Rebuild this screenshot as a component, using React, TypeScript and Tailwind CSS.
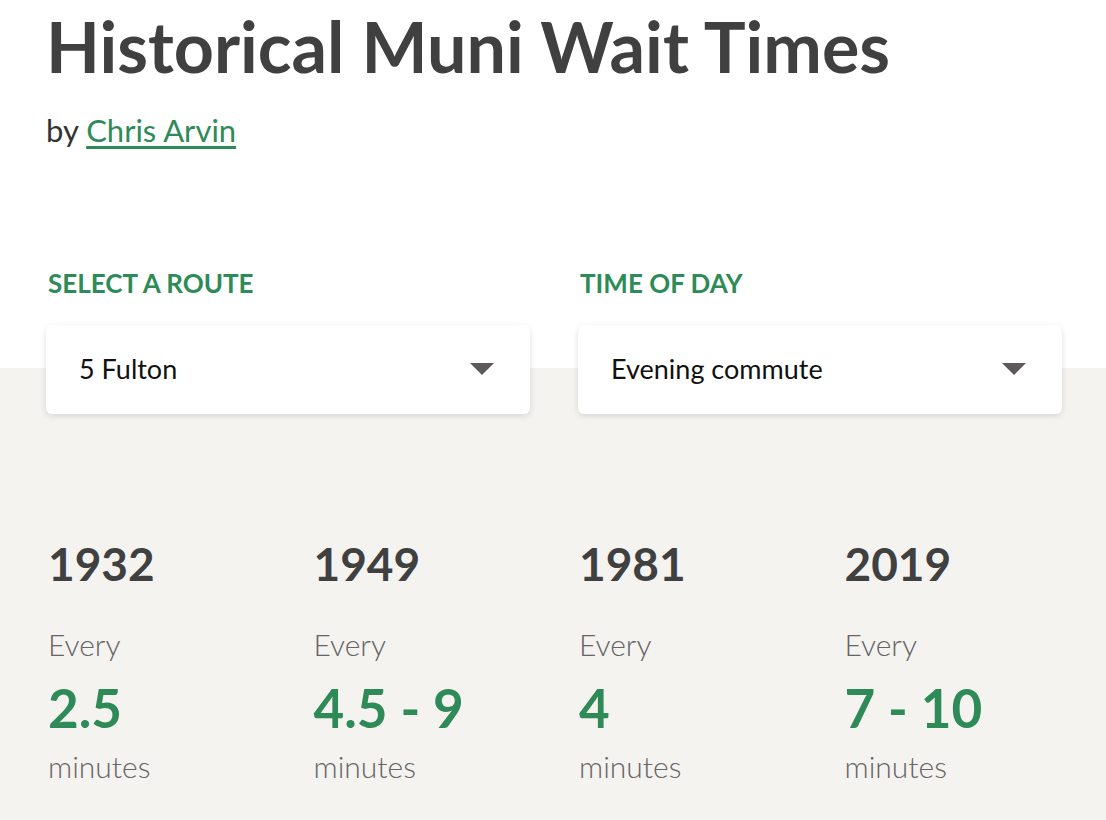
import React from 'react';

const stats = [
  { year: '1932', value: '2.5' },
  { year: '1949', value: '4.5 - 9' },
  { year: '1981', value: '4' },
  { year: '2019', value: '7 - 10' },
];

function Select({ value }: { value: string }) {
  return (
    <div className="flex h-[89px] items-center justify-between rounded-md bg-white pl-[33px] pr-[36px] shadow-[0_2px_6px_rgba(0,0,0,0.12)]">
      <span className="text-[27px] text-[#111]">{value}</span>
      <svg width="24" height="13" viewBox="0 0 24 13">
        <path d="M0 0 H24 L12 12 Z" fill="#5f5a5a" />
      </svg>
    </div>
  );
}

export default function App() {
  return (
    <div className="min-h-screen bg-white font-['Lato',sans-serif]">
      <div className="pl-[46px] pr-[44px] pt-[6px]">
        <h1 className="text-[70px] font-bold leading-[80px] text-[#404040]">Historical Muni Wait Times</h1>
        <p className="mt-[26px] text-[31px] leading-[36px] text-[#333]">
          by{' '}
          <a href="#" className="text-[#2e8b57] underline underline-offset-4">
            Chris Arvin
          </a>
        </p>

        <div className="mt-[119px] grid grid-cols-2 gap-x-[48px]">
          <div className="pl-[2px] text-[26px] font-bold leading-[32px] text-[#2e8b57]">SELECT A ROUTE</div>
          <div className="pl-[2px] text-[26px] font-bold leading-[32px] text-[#2e8b57]">TIME OF DAY</div>
        </div>
        <div className="relative z-10 -mb-[46px] mt-[26px] grid grid-cols-2 gap-x-[48px]">
          <Select value="5 Fulton" />
          <Select value="Evening commute" />
        </div>
      </div>

      <div className="bg-[#f4f3f0] pb-[40px] pl-[48px] pr-[44px] pt-[168px]">
        <div className="grid grid-cols-4 gap-x-[48px]">
          {stats.map((s) => (
            <div key={s.year} className="flex flex-col">
              <div className="text-[46px] font-bold leading-[56px] text-[#404040]">{s.year}</div>
              <div className="mt-[32px] text-[30px] font-light leading-[40px] text-[#666464]">Every</div>
              <div className="mt-[14px] text-[53px] font-bold leading-[60px] text-[#2e8b57]">{s.value}</div>
              <div className="mt-[8px] text-[30px] font-light leading-[40px] text-[#666464]">minutes</div>
            </div>
          ))}
        </div>
      </div>
    </div>
  );
}
